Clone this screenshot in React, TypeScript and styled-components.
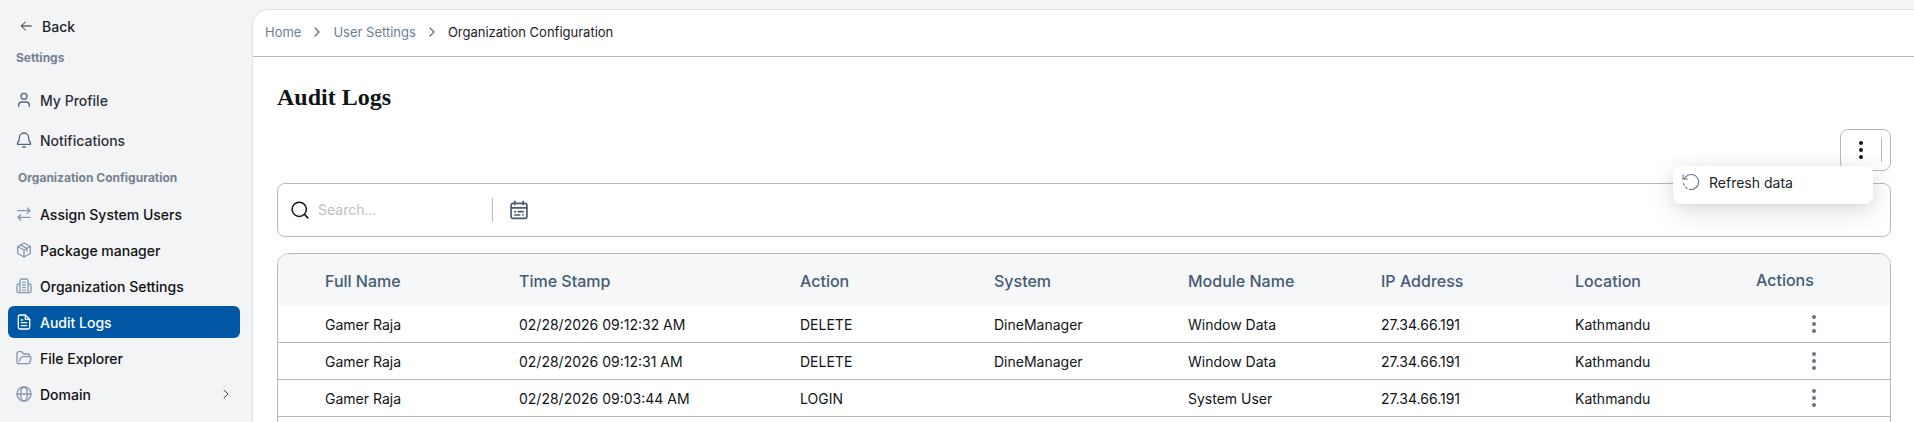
import React from "react";
import styled, { createGlobalStyle } from "styled-components";

const sans = `Inter, "Liberation Sans", sans-serif`;
const line = "#b8babd";

const GlobalStyle = createGlobalStyle`
  *, *::before, *::after { box-sizing: border-box; }
  html { background: #f3f4f6; }
  body { margin: 0; font-family: ${sans}; color: #0f1417; }
  button { border: 0; background: none; padding: 0; font: inherit; color: inherit; cursor: pointer; }
  a { color: inherit; text-decoration: none; }
  svg { display: block; flex: none; }
`;

const Shell = styled.div`
  display: flex;
  height: 100vh;
  overflow: hidden;
`;

const Sidebar = styled.aside`
  flex: none;
  width: 252px;
  padding: 12px 12px 0 8px;
  overflow: hidden;
`;

const BackButton = styled.button`
  display: flex;
  align-items: center;
  gap: 8px;
  height: 28px;
  margin-bottom: 10px;
  padding-left: 10px;
  font-size: 14px;
  font-weight: 500;
  color: #212529;
`;

const GroupLabel = styled.h2<{ $indent: number }>`
  margin: 0;
  padding-left: ${(p) => p.$indent}px;
  font-size: 12px;
  line-height: 16px;
  font-weight: 700;
  color: #748290;
`;

const NavList = styled.ul<{ $gap: number; $top: number; $bottom?: number }>`
  list-style: none;
  display: flex;
  flex-direction: column;
  gap: ${(p) => p.$gap}px;
  margin: ${(p) => p.$top}px 0 ${(p) => p.$bottom ?? 0}px;
  padding: 0;
`;

const NavLink = styled.a<{ $active?: boolean; $soft?: boolean }>`
  display: flex;
  align-items: center;
  gap: 8px;
  height: 32px;
  padding: 0 6px 0 8px;
  border-radius: 6px;
  font-size: 14px;
  font-weight: 500;
  color: ${(p) => (p.$active ? "#ffffff" : p.$soft ? "#2b3036" : "#101214")};
  background: ${(p) => (p.$active ? "#0058a5" : "transparent")};

  svg { color: ${(p) => (p.$active ? "#ffffff" : p.$soft ? "#53657d" : "#8598ad")}; }
  svg:nth-of-type(2) { margin-left: auto; color: #3c444d; }
`;

const Main = styled.main`
  flex: 1;
  min-width: 0;
  margin-top: 9px;
  border: 1px solid #dfe3e8;
  border-width: 1px 0 0 1px;
  border-radius: 16px 0 0 0;
  background: #ffffff;
  overflow: hidden;
`;

const Breadcrumbs = styled.nav`
  display: flex;
  align-items: center;
  gap: 8px;
  height: 47px;
  padding: 0 12px 2px;
  border-bottom: 1px solid ${line};
  font-size: 13px;
  color: #6f8092;

  svg { color: #66727f; }
`;

const Current = styled.span`
  color: #1c2024;
`;

const Content = styled.div`
  padding: 24px 23px 0 24px;
`;

const Title = styled.h1`
  margin: 0;
  font-family: "Liberation Serif", serif;
  font-size: 24px;
  line-height: 32px;
  font-weight: 700;
`;

const Toolbar = styled.div`
  position: relative;
  display: flex;
  justify-content: flex-end;
  margin: 16px 0 12px;
`;

const MoreBox = styled.div`
  display: flex;
  align-items: center;
  justify-content: space-between;
  width: 51px;
  height: 42px;
  padding: 0 8px;
  border: 1px solid ${line};
  border-radius: 8px;
`;

const Divider = styled.span`
  width: 1px;
  height: 24px;
  background: ${line};
`;

const Menu = styled.div`
  position: absolute;
  top: 37px;
  right: 18px;
  width: 200px;
  border-radius: 8px;
  background: #ffffff;
  box-shadow: 0 8px 32px rgba(0, 0, 0, 0.08), 0 4px 16px rgba(0, 0, 0, 0.1);
`;

const MenuItem = styled.button`
  display: flex;
  align-items: center;
  gap: 9px;
  width: 100%;
  height: 38px;
  padding: 0 9px 6px;
  font-size: 14px;
  color: #212529;

  svg { color: #66758a; }
`;

const SearchBar = styled.div`
  display: flex;
  align-items: center;
  height: 54px;
  padding-left: 13px;
  border: 1px solid ${line};
  border-radius: 8px;
`;

const SearchInput = styled.input`
  width: 165px;
  margin: 0 9px;
  padding: 0 0 2px;
  border: 0;
  outline: 0;
  font-family: ${sans};
  font-size: 14px;
  background: none;

  &::placeholder { color: #bfc0c2; }
`;

const DateButton = styled.button`
  margin-left: 16px;
  color: #475a73;
`;

const TableCard = styled.div`
  margin-top: 16px;
  border: 1px solid ${line};
  border-radius: 12px 12px 0 0;
  overflow: hidden;
`;

const Table = styled.table`
  width: 100%;
  table-layout: fixed;
  border-collapse: separate;
  border-spacing: 0;
`;

const HeadCell = styled.th`
  height: 52px;
  padding: 2px 0 0 10px;
  background: #f5f7f9;
  text-align: left;
  font-size: 16px;
  font-weight: 500;
  color: #475a73;

  &:first-child { padding-left: 47px; }
  &:last-child { padding-top: 0; }
`;

const Cell = styled.td`
  height: 37px;
  padding: 0 0 0 10px;
  border-bottom: 1px solid ${line};
  font-size: 14px;

  &:first-child { padding-left: 47px; }
`;

const ActionCell = styled(Cell)`
  padding: 0 8px 0 0;
  text-align: center;
`;

const IconButton = styled.button`
  display: inline-block;
  vertical-align: middle;
  color: #64748b;
`;

type IconProps = { size: number; width?: number; children: React.ReactNode };

const Icon = ({ size, width = 2, children }: IconProps) => (
  <svg width={size} height={size} viewBox="0 0 24 24" fill="none" stroke="currentColor"
    strokeWidth={width} strokeLinecap="round" strokeLinejoin="round" aria-hidden="true">
    {children}
  </svg>
);

const Dots = ({ color }: { color?: string }) => (
  <svg width="24" height="24" viewBox="0 0 24 24" fill={color ?? "currentColor"} aria-hidden="true">
    <circle cx="12" cy="5" r="2" />
    <circle cx="12" cy="12" r="2" />
    <circle cx="12" cy="19" r="2" />
  </svg>
);

const Chevron = ({ width }: { width?: number }) => (
  <Icon size={16} width={width}><path d="m9 18 6-6-6-6" /></Icon>
);

const icons = {
  user: <><circle cx="12" cy="6.500" r="4.500" /><path d="M4 21.500V20a5 5 0 0 1 5-5h6a5 5 0 0 1 5 5v1.500" /></>,
  bell: <><path d="M10 22.500h4" /><path d="M12 1.500a7 7 0 0 0-7 7c0 4-1 6-2.600 8-.6.800-.2 2 1 2h17.200c1.200 0 1.600-1.200 1-2-1.600-2-2.600-4-2.600-8a7 7 0 0 0-7-7z" /></>,
  swap: <><path d="M3 7h18M17 3l4 4-4 4" /><path d="M21 17H3M7 13l-4 4 4 4" /></>,
  box: <><path d="M12 1.500 21.500 6.700v10.600L12 22.500l-9.500-5.200V6.700z" /><path d="M2.500 6.700 12 12l9.500-5.300M12 12v10.500M7 4.200l9.500 5.300v4" /></>,
  building: <><path d="M6 22V4a2.500 2.500 0 0 1 2.500-2.500h7A2.500 2.500 0 0 1 18 4v18" /><path d="M6 9H4a2.500 2.500 0 0 0-2.500 2.500V20A2 2 0 0 0 3.500 22h17a2 2 0 0 0 2-2v-8.500A2.500 2.500 0 0 0 20 9h-2" /><path d="M10 6.500h4M10 10.500h4M10 14.500h4M10 18.500h4" /></>,
  file: <><path d="M14 1.500H6A2.500 2.500 0 0 0 3.500 4v16A2.500 2.500 0 0 0 6 22.500h12a2.500 2.500 0 0 0 2.500-2.500V8z" /><path d="M14 1.500V8h6.500M8 9h2M8 13h8M8 17.500h8" /></>,
  folder: <><path d="M4 20.500A2.500 2.500 0 0 1 1.500 18V5A2.500 2.500 0 0 1 4 2.500h4.500L11.500 6H18a2.500 2.500 0 0 1 2.500 2.500V10" /><path d="M4 20.500h14.500a2.500 2.500 0 0 0 2.400-1.800L22.500 12a1.600 1.600 0 0 0-1.500-2H10a3 3 0 0 0-2.800 2L5 16.500" /></>,
  globe: <><circle cx="12" cy="12" r="10.500" /><path d="M1.500 12h21" /><ellipse cx="12" cy="12" rx="5" ry="10.500" /></>,
};

type NavItem = { label: string; icon: keyof typeof icons; active?: boolean; nested?: boolean };

const personal: NavItem[] = [
  { label: "My Profile", icon: "user" },
  { label: "Notifications", icon: "bell" },
];

const organization: NavItem[] = [
  { label: "Assign System Users", icon: "swap" },
  { label: "Package manager", icon: "box" },
  { label: "Organization Settings", icon: "building" },
  { label: "Audit Logs", icon: "file", active: true },
  { label: "File Explorer", icon: "folder" },
  { label: "Domain", icon: "globe", nested: true },
];

const NavEntry = ({ item, soft }: { item: NavItem; soft?: boolean }) => (
  <li>
    <NavLink href="#" $active={item.active} $soft={soft} aria-current={item.active ? "page" : undefined}>
      <Icon size={16}>{icons[item.icon]}</Icon>
      {item.label}
      {item.nested && <Chevron width={1.5} />}
    </NavLink>
  </li>
);

const columns = [
  { label: "Full Name", width: 231 },
  { label: "Time Stamp", width: 281 },
  { label: "Action", width: 194 },
  { label: "System", width: 194 },
  { label: "Module Name", width: 193 },
  { label: "IP Address", width: 194 },
  { label: "Location", width: 181 },
  { label: "Actions", width: 144 },
];

const logs = [
  ["Gamer Raja", "02/28/2026 09:12:32 AM", "DELETE", "DineManager", "Window Data", "27.34.66.191", "Kathmandu"],
  ["Gamer Raja", "02/28/2026 09:12:31 AM", "DELETE", "DineManager", "Window Data", "27.34.66.191", "Kathmandu"],
  ["Gamer Raja", "02/28/2026 09:03:44 AM", "LOGIN", "", "System User", "27.34.66.191", "Kathmandu"],
];

export default function App() {
  return (
    <>
      <GlobalStyle />
      <Shell>
        <Sidebar>
          <BackButton type="button">
            <Icon size={16} width={1.5}><path d="M20 12H5M11 6l-6 6 6 6" /></Icon>
            Back
          </BackButton>
          <GroupLabel $indent={8}>Settings</GroupLabel>
          <NavList $gap={8} $top={18} $bottom={14}>
            {personal.map((item) => <NavEntry key={item.label} item={item} soft />)}
          </NavList>
          <GroupLabel $indent={10}>Organization Configuration</GroupLabel>
          <NavList $gap={4} $top={12}>
            {organization.map((item) => <NavEntry key={item.label} item={item} />)}
          </NavList>
        </Sidebar>
        <Main>
          <Breadcrumbs aria-label="Breadcrumb">
            <a href="#">Home</a>
            <Chevron />
            <a href="#">User Settings</a>
            <Chevron />
            <Current aria-current="page">Organization Configuration</Current>
          </Breadcrumbs>
          <Content>
            <Title>Audit Logs</Title>
            <Toolbar>
              <MoreBox>
                <button type="button" aria-label="More options"><Dots color="#14181c" /></button>
                <Divider />
              </MoreBox>
              <Menu role="menu">
                <MenuItem type="button" role="menuitem">
                  <Icon size={18} width={1.5}>
                    <path d="M3 8A10 10 0 1 1 12 22" />
                    <path d="M1.500 2.500V8h6" />
                    <path d="M12 22A10 10 0 0 1 2 12" strokeDasharray="2.500 3" />
                  </Icon>
                  Refresh data
                </MenuItem>
              </Menu>
            </Toolbar>
            <SearchBar>
              <Icon size={18} width={2}><circle cx="11" cy="11" r="9.500" /><path d="m18.500 18.500 4 4" /></Icon>
              <SearchInput type="search" placeholder="Search..." aria-label="Search" />
              <Divider />
              <DateButton type="button" aria-label="Pick a date">
                <Icon size={20}>
                  <rect x="2.500" y="4" width="19" height="18" rx="2.500" />
                  <path d="M2.500 9.500h19M7 1.500v4M17 1.500v4M7 14h.500M11 14h6M7 18h6M16.500 18h.500" />
                </Icon>
              </DateButton>
            </SearchBar>
            <TableCard>
              <Table>
                <colgroup>
                  {columns.map((c) => <col key={c.label} width={c.width} />)}
                </colgroup>
                <thead>
                  <tr>{columns.map((c) => <HeadCell key={c.label} scope="col">{c.label}</HeadCell>)}</tr>
                </thead>
                <tbody>
                  {logs.map((row, r) => (
                    <tr key={r}>
                      {row.map((value, c) => <Cell key={c}>{value}</Cell>)}
                      <ActionCell>
                        <IconButton type="button" aria-label="Row actions"><Dots /></IconButton>
                      </ActionCell>
                    </tr>
                  ))}
                  <tr>
                    <Cell colSpan={8} />
                  </tr>
                </tbody>
              </Table>
            </TableCard>
          </Content>
        </Main>
      </Shell>
    </>
  );
}
